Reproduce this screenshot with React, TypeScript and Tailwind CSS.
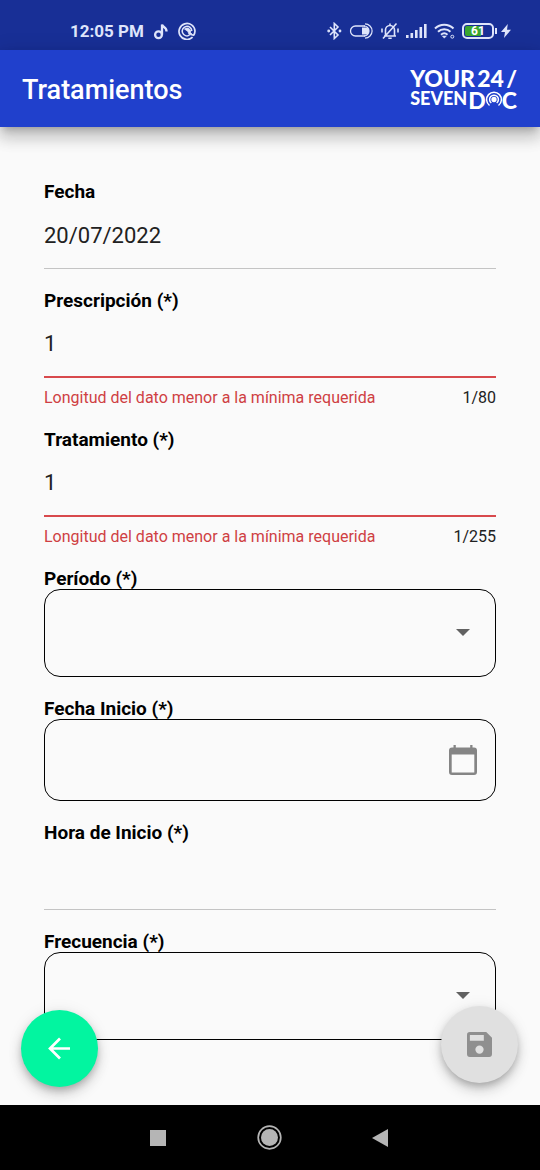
import { useState } from "react";
import type { ReactNode } from "react";

const labelClass = "block h-[22px] text-[19px] leading-6 font-bold text-black";

function StatusBar() {
  return (
    <div className="flex h-[50px] items-center justify-between bg-[#182f96] pt-3 pr-[29px] pl-[70px] text-[#dfe5fb]">
      <div className="flex items-center gap-[9px]">
        <span className="text-[17px] leading-5 font-bold">12:05 PM</span>
        <svg className="h-[17px] w-4" viewBox="0 0 16 17" fill="none" stroke="currentColor" strokeWidth="2.300">
          <circle cx="5.500" cy="11.800" r="3.400" />
          <path d="M9 11.800V1.500C9.500 4.500 13.800 3.600 13.500 8.500" />
        </svg>
        <svg className="h-[18px] w-[18px]" viewBox="0 0 18 18" fill="none" stroke="currentColor">
          <path d="M14.600 15.200A8 8 0 1 1 17 9c0 2-.7 3.500-1.700 4.800" strokeWidth="1.700" />
          <path d="M11.500 13.200A4.800 4.800 0 1 1 13.800 9" strokeWidth="1.500" />
          <path d="M6.500 7q3-2 5 0t1 3.500l3 3-4.500-1-1-3z" fill="currentColor" strokeWidth=".8" />
        </svg>
      </div>
      <div className="flex items-center gap-[7px]">
        <svg className="h-[18px] w-[15px]" viewBox="0 0 15 18" fill="none" stroke="currentColor" strokeWidth="1.600">
          <path d="M3 5l8 8-3.700 3.500V1.500L11 5l-8 8" />
          <circle cx="1.700" cy="9" r=".6" fill="currentColor" />
          <circle cx="13" cy="9" r=".6" fill="currentColor" />
        </svg>
        <svg className="h-4 w-[25px]" viewBox="0 0 25 16" fill="none" stroke="currentColor">
          <path d="M16 13H6.500a5 5 0 0 1 0-10H16" strokeWidth="1.300" />
          <path d="M13 4.500h3.500a3.500 3.500 0 0 1 0 7H13z" fill="currentColor" stroke="none" />
          <path d="M15 3a5 5 0 0 1 0 10M16 .9a7.100 7.100 0 0 1 0 14.200" strokeWidth="1.200" />
        </svg>
        <svg className="h-[18px] w-[18px]" viewBox="0 0 18 18" fill="none" stroke="currentColor" strokeWidth="1.600">
          <path d="M3 14h12M4.500 13.500V8a4.500 4.500 0 0 1 9 0v5.500M9 3.500V1.500M7.300 16.300h3.400M15.500 1.500L2 16.500M1 6.500v4M17 6.500v4" />
        </svg>
        <svg className="h-4 w-[21px]" viewBox="0 0 21 16" fill="currentColor">
          <rect x="0" y="12" width="2.600" height="3" />
          <rect x="4.500" y="10" width="2.600" height="5" />
          <rect x="9" y="7" width="2.600" height="8" />
          <rect x="13.500" y="4" width="2.600" height="11" />
          <rect x="18" y="1" width="2.600" height="14" />
        </svg>
        <svg className="h-4 w-[21px]" viewBox="0 0 21 16" fill="none" stroke="currentColor" strokeWidth="2">
          <path d="M1 5.500a13 13 0 0 1 18.500 0M4 8.700a9 9 0 0 1 12.500 0M7 11.700a5 5 0 0 1 6.500 0" />
          <path d="M8.300 13l2 2.200 2-2.200z" fill="currentColor" strokeWidth=".5" />
          <circle cx="18.300" cy="13.700" r="1.500" strokeWidth="1" />
        </svg>
        <div className="flex items-center gap-1">
          <div className="flex items-center gap-px">
            <div className="flex h-4 w-8 items-center justify-center rounded-[5px] border-2 border-[#dfe5fb] bg-linear-to-r from-[#3aa630] from-60% to-[#182f96] to-60% bg-clip-content p-px text-[12px] leading-3 font-bold text-white">
              61
            </div>
            <span className="h-1.5 w-0.5 bg-[#dfe5fb]" />
          </div>
          <svg className="h-3.5 w-2.5" viewBox="0 0 10 14" fill="currentColor">
            <path d="M6.800 0L0 8h4L3 14l7-8.300H6z" />
          </svg>
        </div>
      </div>
    </div>
  );
}

function Logo() {
  return (
    <div className="flex flex-col font-[Lato,sans-serif] font-black text-white">
      <div className="flex items-center justify-between text-[23px] leading-[22px]">
        <span>YOUR</span>
        <span>24</span>
        <span>/</span>
      </div>
      <div className="flex items-start text-[18px] leading-[19px]">
        <span>SEVEN</span>
        <span className="ml-px text-[23px] leading-[22px]">D</span>
        <svg className="-mx-px mt-0.5 h-[17px] w-[18px]" viewBox="0 0 18 17" fill="none" stroke="currentColor" strokeWidth="1.500">
          <circle cx="9" cy="8.500" r="1.900" fill="currentColor" />
          <path d="M6.300 12a4.400 4.400 0 1 1 5.400 0M4.500 14.500a7.400 7.400 0 1 1 9 0" />
        </svg>
        <span className="text-[23px] leading-[22px]">C</span>
      </div>
    </div>
  );
}

function LineInput({ id, label, initial = "", max }: { id: string; label: string; initial?: string; max?: number }) {
  const [value, setValue] = useState(initial);
  const invalid = max !== undefined;
  return (
    <div>
      <label htmlFor={id} className={labelClass}>{label}</label>
      <input
        id={id}
        value={value}
        maxLength={max}
        aria-invalid={invalid}
        aria-describedby={invalid ? `${id}-error` : undefined}
        onChange={(e) => setValue(e.target.value)}
        className={`block h-[67px] w-full bg-transparent text-[22px] text-[#212121] outline-none ${
          invalid ? "border-b-2 border-[#d8494c]" : "border-b border-[#c4c4c4]"
        }`}
      />
      {invalid && (
        <div className="mt-2 flex h-[22px] justify-between text-[16px] leading-6">
          <span id={`${id}-error`} className="text-[#cf3f43]">Longitud del dato menor a la mínima requerida</span>
          <span className="text-[#212121]">{value.length}/{max}</span>
        </div>
      )}
    </div>
  );
}

function SelectField({ id, label }: { id: string; label: string }) {
  return (
    <div>
      <label htmlFor={id} className={labelClass}>{label}</label>
      <div className="relative">
        <select
          id={id}
          defaultValue=""
          className="block h-[88px] w-full appearance-none rounded-[16px] border border-black bg-transparent px-4 text-[22px] outline-none"
        >
          <option value="" />
        </select>
        <svg className="pointer-events-none absolute top-10 right-[26px] h-[7px] w-[14px]" viewBox="0 0 14 7" fill="#616161">
          <path d="M0 0h14L7 7z" />
        </svg>
      </div>
    </div>
  );
}

function DateField({ id, label }: { id: string; label: string }) {
  return (
    <div>
      <label htmlFor={id} className={labelClass}>{label}</label>
      <div className="flex h-[82px] items-center rounded-[16px] border border-black pr-[17px] pl-4">
        <input id={id} className="h-full min-w-0 flex-1 bg-transparent text-[22px] outline-none" />
        <button type="button" aria-label={`Elegir ${label}`} className="text-[#858585]">
          <svg className="h-8 w-[30px]" viewBox="0 0 30 32">
            <path
              fill="currentColor"
              fillRule="evenodd"
              d="M5.500 1h2.300v2.500h14.400V1h2.300v2.500H26a3 3 0 0 1 3 3V28a3 3 0 0 1-3 3H4a3 3 0 0 1-3-3V6.500a3 3 0 0 1 3-3h1.500zM3.700 10.500v18h22.600v-18z"
            />
          </svg>
        </button>
      </div>
    </div>
  );
}

function Fab({ label, className, disabled, children }: { label: string; className: string; disabled?: boolean; children: ReactNode }) {
  return (
    <button
      type="button"
      aria-label={label}
      disabled={disabled}
      className={`pointer-events-auto flex size-[77px] items-center justify-center rounded-full shadow-[0_4px_7px_-1px_rgba(0,0,0,0.2),0_8px_14px_rgba(0,0,0,0.14),0_1px_16px_rgba(0,0,0,0.08)] ${className}`}
    >
      {children}
    </button>
  );
}

export default function App() {
  return (
    <div className="flex min-h-screen flex-col bg-[#fafafa] font-[Roboto,sans-serif]">
      <StatusBar />
      <header className="relative flex h-[77px] items-center justify-between bg-[#2040cc] pr-[23px] pl-[22px] shadow-[0_6px_7px_-4px_rgba(0,0,0,0.2),0_11px_14px_1px_rgba(0,0,0,0.14),0_4px_19px_3px_rgba(0,0,0,0.12)]">
        <h1 className="pt-0.5 text-[27px] leading-8 font-medium text-white">Tratamientos</h1>
        <Logo />
      </header>
      <main className="relative flex-1 px-11 pt-[53px] pb-[65px]">
        <form className="flex flex-col gap-5">
          <LineInput id="fecha" label="Fecha" initial="20/07/2022" />
          <LineInput id="prescripcion" label="Prescripción (*)" initial="1" max={80} />
          <LineInput id="tratamiento" label="Tratamiento (*)" initial="1" max={255} />
          <SelectField id="periodo" label="Período (*)" />
          <DateField id="fecha-inicio" label="Fecha Inicio (*)" />
          <LineInput id="hora-inicio" label="Hora de Inicio (*)" />
          <SelectField id="frecuencia" label="Frecuencia (*)" />
        </form>
        <div className="pointer-events-none absolute inset-x-0 bottom-0 flex items-end justify-between pr-[22px] pb-[18px] pl-[21px]">
          <Fab label="Volver" className="bg-[#02f5a0] text-white">
            <svg className="size-[23px]" viewBox="0 0 23 23" fill="none" stroke="currentColor" strokeWidth="2.700">
              <path d="M22 11.500H2M12 1.500l-10 10 10 10" />
            </svg>
          </Fab>
          <Fab label="Guardar" disabled className="mb-1 bg-[#e0e0e0] text-[#8f8f8f]">
            <svg className="size-[25px]" viewBox="0 0 26 26">
              <path
                fill="currentColor"
                fillRule="evenodd"
                d="M3 0h17l6 6v17a3 3 0 0 1-3 3H3a3 3 0 0 1-3-3V3a3 3 0 0 1 3-3zM3 3v6h14.500V3zM13 14a4.300 4.300 0 1 0 0 8.600 4.300 4.300 0 0 0 0-8.600z"
              />
            </svg>
          </Fab>
        </div>
      </main>
      <nav className="flex h-[65px] items-center justify-between bg-black pr-[152px] pl-[150px] text-[#b5b5b5]">
        <button type="button" aria-label="Recientes">
          <span className="block size-4 bg-[#b5b5b5]" />
        </button>
        <button type="button" aria-label="Inicio">
          <svg className="size-[25px]" viewBox="0 0 25 25" fill="none" stroke="currentColor">
            <circle cx="12.500" cy="12.500" r="11.300" strokeWidth="1.700" />
            <circle cx="12.500" cy="12.500" r="8.500" fill="currentColor" stroke="none" />
          </svg>
        </button>
        <button type="button" aria-label="Atrás">
          <svg className="h-[18px] w-4" viewBox="0 0 16 18" fill="currentColor">
            <path d="M16 0v18L0 9z" />
          </svg>
        </button>
      </nav>
    </div>
  );
}
